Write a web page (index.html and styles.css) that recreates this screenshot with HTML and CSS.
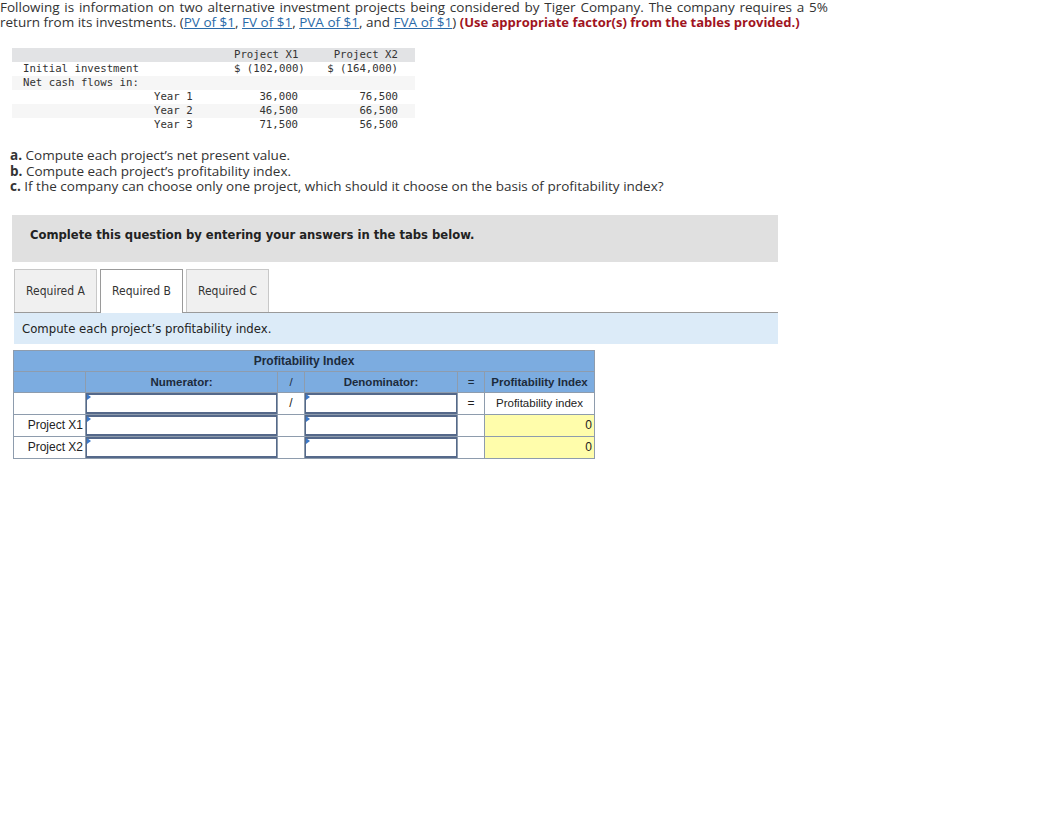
FILE: index.html
```html
<!DOCTYPE html>
<html lang="en">
<head>
    <meta charset="UTF-8">
    <title>Profitability Index</title>
    <link rel="stylesheet" href="styles.css">
</head>
<body>

    <p class="intro">
        Following is information on two alternative investment projects being considered by Tiger Company. The company requires a 5% return from its investments. (<a href="#">PV of $1</a>, <a href="#">FV of $1</a>, <a href="#">PVA of $1</a>, and <a href="#">FVA of $1</a>) <strong class="warn">(Use appropriate factor(s) from the tables provided.)</strong>
    </p>

    <table class="data">
        <tr class="head">
            <td class="label"></td>
            <td class="year"></td>
            <td class="num">Project X1</td>
            <td class="num last">Project X2</td>
        </tr>
        <tr>
            <td class="label">Initial investment</td>
            <td class="year"></td>
            <td class="num">$ (102,000)</td>
            <td class="num last">$ (164,000)</td>
        </tr>
        <tr class="stripe">
            <td class="label">Net cash flows in:</td>
            <td class="year"></td>
            <td class="num"></td>
            <td class="num last"></td>
        </tr>
        <tr>
            <td class="label"></td>
            <td class="year">Year 1</td>
            <td class="num">36,000</td>
            <td class="num last">76,500</td>
        </tr>
        <tr class="stripe">
            <td class="label"></td>
            <td class="year">Year 2</td>
            <td class="num">46,500</td>
            <td class="num last">66,500</td>
        </tr>
        <tr>
            <td class="label"></td>
            <td class="year">Year 3</td>
            <td class="num">71,500</td>
            <td class="num last">56,500</td>
        </tr>
    </table>

    <div class="questions">
        <p><b>a.</b> Compute each project’s net present value.</p>
        <p><b>b.</b> Compute each project’s profitability index.</p>
        <p><b>c.</b> If the company can choose only one project, which should it choose on the basis of profitability index?</p>
    </div>

    <div class="notice">Complete this question by entering your answers in the tabs below.</div>

    <div class="tabs">
        <div class="tab">Required A</div>
        <div class="tab active">Required B</div>
        <div class="tab">Required C</div>
    </div>

    <div class="tab-intro">Compute each project’s profitability index.</div>

    <table class="pi">
        <tr class="title">
            <th colspan="6">Profitability Index</th>
        </tr>
        <tr class="cols">
            <th class="c-name"></th>
            <th class="c-num">Numerator:</th>
            <th class="c-op">/</th>
            <th class="c-den">Denominator:</th>
            <th class="c-op">=</th>
            <th class="c-res">Profitability Index</th>
        </tr>
        <tr>
            <td class="c-name"></td>
            <td class="entry"><span class="box"></span></td>
            <td class="c-op">/</td>
            <td class="entry"><span class="box"></span></td>
            <td class="c-op">=</td>
            <td class="c-res center">Profitability index</td>
        </tr>
        <tr>
            <td class="c-name">Project X1</td>
            <td class="entry"><span class="box"></span></td>
            <td class="c-op"></td>
            <td class="entry"><span class="box"></span></td>
            <td class="c-op"></td>
            <td class="c-res result">0</td>
        </tr>
        <tr>
            <td class="c-name">Project X2</td>
            <td class="entry"><span class="box"></span></td>
            <td class="c-op"></td>
            <td class="entry"><span class="box"></span></td>
            <td class="c-op"></td>
            <td class="c-res result">0</td>
        </tr>
    </table>

</body>
</html>
```

FILE: styles.css
```css
body {
    margin: 0;
    font-family: "Open Sans", Lato, sans-serif;
    color: #333;
    background: #fff;
}

.intro {
    width: 828px;
    margin: 0;
    font-size: 13.5px;
    line-height: 15px;
    text-align: justify;
    text-align-last: left;
}

.intro a {
    color: #2a6aa8;
    text-decoration: underline;
}

.warn {
    color: #a0141e;
    font-size: 13px;
}

.data {
    margin: 18px 0 0 12px;
    width: 403px;
    table-layout: fixed;
    border-collapse: collapse;
    font-family: "DejaVu Sans Mono", "Liberation Mono", monospace;
    font-size: 10.7px;
    color: #333;
}

.data td {
    height: 14px;
    padding: 0;
    line-height: 14px;
    white-space: nowrap;
}

.data .head {
    background: #e2e3e5;
}

.data .stripe {
    background: #f6f6f6;
}

.data .label {
    width: 131px;
    padding-left: 11px;
}

.data .year {
    width: 80px;
}

.data .num {
    width: 64px;
    padding-right: 8px;
    text-align: right;
}

.data .num.last {
    width: 92px;
    padding-right: 17px;
}

.questions {
    margin: 16px 0 0 10px;
    font-size: 13.5px;
    line-height: 15.5px;
}

.questions p {
    margin: 0;
}

.notice {
    margin: 20px 0 0 12px;
    width: 748px;
    height: 47px;
    padding-left: 18px;
    background: #e0e0e0;
    font-family: "DejaVu Sans Condensed", "Liberation Sans", sans-serif;
    font-weight: bold;
    font-size: 12.9px;
    line-height: 39px;
    color: #222;
}

.tabs {
    display: flex;
    gap: 3px;
    margin: 7px 0 0 14px;
    width: 764px;
    border-bottom: 1px solid #9a9a9a;
}

.tab {
    width: 81px;
    height: 42px;
    border: 1px solid #c8c8c8;
    border-bottom: none;
    background: #f0f0f0;
    font-family: "DejaVu Sans Condensed", "Liberation Sans", sans-serif;
    font-size: 12px;
    line-height: 42px;
    text-align: center;
    color: #333;
}

.tab.active {
    background: #fff;
    border-color: #9a9a9a;
    margin-bottom: -1px;
    height: 43px;
}

.tab-intro {
    margin-left: 14px;
    width: 756px;
    height: 31px;
    padding-left: 8px;
    background: #dcebf8;
    font-family: "DejaVu Sans Condensed", "Liberation Sans", sans-serif;
    font-size: 13px;
    line-height: 31px;
    color: #222;
}

.pi {
    margin: 6px 0 0 13px;
    border-collapse: collapse;
    font-family: "Liberation Sans", Arial, sans-serif;
    font-size: 12px;
    color: #222;
}

.pi th,
.pi td {
    height: 20px;
    padding: 0 2px;
    border: 1px solid #8e9cad;
    white-space: nowrap;
}

.pi th {
    background: #7cace0;
    font-weight: bold;
    color: #1c2b3c;
    text-align: center;
}

.pi .cols th {
    font-size: 11.5px;
}

.pi .c-op,
.pi .cols .c-op {
    font-weight: normal;
}

.pi .c-name {
    width: 67px;
    text-align: right;
}

.pi .c-num {
    width: 187px;
}

.pi .c-op {
    width: 22px;
    text-align: center;
}

.pi .c-den {
    width: 148px;
}

.pi .c-res {
    width: 105px;
}

.pi td.c-res {
    text-align: right;
}

.pi td.center {
    text-align: center;
    font-size: 11.5px;
}

.pi .result {
    background: #fffdab;
}

.pi .entry {
    padding: 0;
    position: relative;
}

.box {
    display: block;
    height: 17px;
    border: 1px solid #55698a;
    border-width: 2px 1px 2px 1px;
    background: #fff;
}

.entry::before {
    content: "";
    position: absolute;
    left: 1px;
    top: 1px;
    border-left: 4px solid #3b78c8;
    border-top: 3px solid transparent;
    border-bottom: 3px solid transparent;
}
```
